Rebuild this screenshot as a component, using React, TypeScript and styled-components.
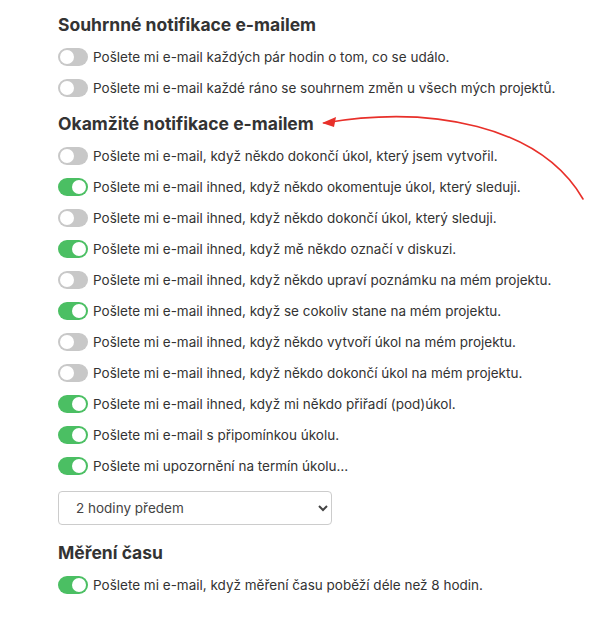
import React from "react";
import styled, { createGlobalStyle } from "styled-components";

const Global = createGlobalStyle`
  html, body { margin: 0; padding: 0; background: #fff; }
  body { font-family: Inter, "Noto Sans", sans-serif; color: #333; }
`;

const Page = styled.div`
  position: relative;
  width: 610px;
  height: 623px;
  padding: 13px 0 0 58px;
  box-sizing: border-box;
`;

const Heading = styled.h2`
  margin: 0 0 4px;
  font-size: 17.5px;
  line-height: 24px;
  font-weight: 700;
  color: #333;
`;

const Section = styled.section<{ $gap?: number }>`
  margin-bottom: ${(p) => p.$gap ?? 9}px;
`;

const List = styled.div`
  display: flex;
  flex-direction: column;
`;

const Row = styled.label`
  display: flex;
  align-items: center;
  height: 31px;
  font-size: 13.5px;
  color: #333;
`;

const Track = styled.span<{ $on: boolean }>`
  position: relative;
  flex: none;
  width: 30px;
  height: 18px;
  border-radius: 9px;
  background: ${(p) => (p.$on ? "#4bbf63" : "#c8c8c8")};
  margin-right: 5px;
`;

const Knob = styled.span<{ $on: boolean }>`
  position: absolute;
  top: 2px;
  left: ${(p) => (p.$on ? "14px" : "2px")};
  width: 14px;
  height: 14px;
  border-radius: 50%;
  background: #fff;
`;

const Select = styled.select`
  display: block;
  margin: 10px 0 16px;
  width: 274px;
  height: 34px;
  padding: 0 8px 0 13px;
  border: 1px solid #ccc;
  border-radius: 4px;
  background: #fff;
  font-family: Inter, "Noto Sans", sans-serif;
  font-size: 13.5px;
  color: #444;
`;

const Arrow = styled.svg`
  position: absolute;
  left: 310px;
  top: 105px;
  overflow: visible;
`;

const Toggle = ({ on }: { on: boolean }) => (
  <Track $on={on}>
    <Knob $on={on} />
  </Track>
);

const summary = [
  { t: "Pošlete mi e-mail každých pár hodin o tom, co se událo.", on: false },
  { t: "Pošlete mi e-mail každé ráno se souhrnem změn u všech mých projektů.", on: false },
];

const instant = [
  { t: "Pošlete mi e-mail, když někdo dokončí úkol, který jsem vytvořil.", on: false },
  { t: "Pošlete mi e-mail ihned, když někdo okomentuje úkol, který sleduji.", on: true },
  { t: "Pošlete mi e-mail ihned, když někdo dokončí úkol, který sleduji.", on: false },
  { t: "Pošlete mi e-mail ihned, když mě někdo označí v diskuzi.", on: true },
  { t: "Pošlete mi e-mail ihned, když někdo upraví poznámku na mém projektu.", on: false },
  { t: "Pošlete mi e-mail ihned, když se cokoliv stane na mém projektu.", on: true },
  { t: "Pošlete mi e-mail ihned, když někdo vytvoří úkol na mém projektu.", on: false },
  { t: "Pošlete mi e-mail ihned, když někdo dokončí úkol na mém projektu.", on: false },
  { t: "Pošlete mi e-mail ihned, když mi někdo přiřadí (pod)úkol.", on: true },
  { t: "Pošlete mi e-mail s připomínkou úkolu.", on: true },
  { t: "Pošlete mi upozornění na termín úkolu…", on: true },
];

export default function App() {
  return (
    <>
      <Global />
      <Page>
        <Section>
          <Heading>Souhrnné notifikace e-mailem</Heading>
          <List>
            {summary.map((r) => (
              <Row key={r.t}>
                <Toggle on={r.on} />
                {r.t}
              </Row>
            ))}
          </List>
        </Section>
        <Section $gap={0}>
          <Heading>Okamžité notifikace e-mailem</Heading>
          <List>
            {instant.map((r) => (
              <Row key={r.t}>
                <Toggle on={r.on} />
                {r.t}
              </Row>
            ))}
          </List>
          <Select defaultValue="2">
            <option value="2">2 hodiny předem</option>
          </Select>
        </Section>
        <Section>
          <Heading>Měření času</Heading>
          <List>
            <Row>
              <Toggle on />
              Pošlete mi e-mail, když měření času poběží déle než 8 hodin.
            </Row>
          </List>
        </Section>
        <Arrow width="280" height="100" viewBox="0 0 280 100">
          <path d="M273 94 C 230 20, 120 0, 14 18" fill="none" stroke="#e8302a" strokeWidth="1.6" strokeLinecap="round" />
          <path d="M12 18 L 26 12 L 24 22 Z" fill="#e8302a" />
        </Arrow>
      </Page>
    </>
  );
}
